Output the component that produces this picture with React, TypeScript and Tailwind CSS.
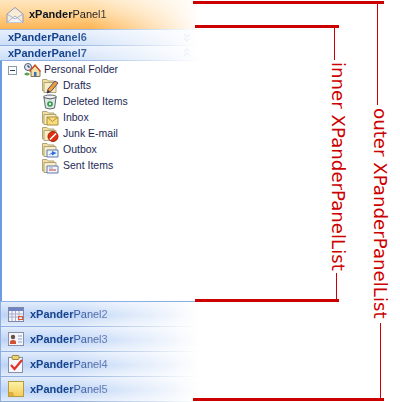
function FolderBase({ children }: { children?: React.ReactNode }) {
  return (
    <svg width="18" height="16" viewBox="0 0 18 16" className="shrink-0">
      <path d="M1.5 3 L1.5 1.5 L6 1.5 L7.5 3 L13 3 L13 13 L1.5 13 Z" fill="#f3dfa0" stroke="#b0a478" strokeWidth="1" />
      <path d="M3 4.5 H15 V14.5 H3 Z" fill="#f8eec4" stroke="#b0a478" strokeWidth="1" />
      {children}
    </svg>
  );
}

function DraftsIcon() {
  return (
    <FolderBase>
      <path d="M6 15 L7 11 L14 3 L17 5 L10 13.5 Z" fill="#f0a030" stroke="#5a4a80" strokeWidth="1" />
      <path d="M6 15 L7 12 L9 14 Z" fill="#30284c" />
    </FolderBase>
  );
}

function TrashIcon() {
  return (
    <svg width="18" height="16" viewBox="0 0 18 16" className="shrink-0">
      <ellipse cx="9" cy="3" rx="6.5" ry="2" fill="#eef2f2" stroke="#60686c" />
      <path d="M3 3.5 L4.5 14 Q9 16 13.5 14 L15 3.5 Q9 6.5 3 3.5 Z" fill="#dfe7e7" stroke="#60686c" />
      <circle cx="9" cy="10" r="2.8" fill="#2f9a48" />
      <circle cx="9" cy="10" r="1.2" fill="#e4f2e4" />
    </svg>
  );
}

function InboxIcon() {
  return (
    <FolderBase>
      <path d="M6 7 H17 V15 H6 Z" fill="#f8dc80" stroke="#b08c30" />
      <path d="M6 7 L11.5 11.5 L17 7" fill="none" stroke="#b08c30" />
    </FolderBase>
  );
}

function JunkIcon() {
  return (
    <FolderBase>
      <circle cx="12" cy="10.5" r="5" fill="#e03010" stroke="#a02008" />
      <path d="M9 13.5 L15 7.5" stroke="#ffffff" strokeWidth="1.6" />
    </FolderBase>
  );
}

function OutboxIcon() {
  return (
    <FolderBase>
      <path d="M6 8 H17 V15 H6 Z" fill="#eef2fa" stroke="#6078b0" />
      <path d="M7.5 13 L11 10.5 V9 L15.5 11 L11 13.5 V12 Z" fill="#2a6ce0" />
    </FolderBase>
  );
}

function SentIcon() {
  return (
    <FolderBase>
      <path d="M6 8 H17 V15 H6 Z" fill="#f2f4fa" stroke="#6078b0" />
      <path d="M8 12 H15" stroke="#c04040" strokeWidth="1" />
      <path d="M8 10 H12" stroke="#90a0c8" strokeWidth="1" />
    </FolderBase>
  );
}

function PersonalIcon() {
  return (
    <svg width="18" height="16" viewBox="0 0 18 16" className="shrink-0">
      <circle cx="5" cy="5" r="3.5" fill="#dfe7f2" stroke="#505a70" />
      <path d="M5 5 L5 3 M5 5 L7 5" stroke="#303a50" />
      <path d="M7 9 L12 3.5 L17 9 V14.5 H8 V9 Z" fill="#f3e2a8" stroke="#8a7640" />
      <path d="M6.5 9.5 L12 3 L17.5 9.5" fill="none" stroke="#d04820" strokeWidth="1.4" />
      <rect x="11" y="10" width="2.5" height="4.5" fill="#3a70c0" />
      <path d="M1 12 Q4 9 7 12 Q4 15 1 12 Z" fill="#58a050" />
    </svg>
  );
}

function MailHeaderIcon() {
  return (
    <svg width="18" height="18" viewBox="0 0 18 18" className="shrink-0">
      <path d="M1 8 L9 1.5 L17 8 V16.5 H1 Z" fill="#f8ecd8" stroke="#8d9bb8" strokeWidth="1" />
      <path d="M1 16.5 L9 10 L17 16.5" fill="#f4f6fc" stroke="#a6b2cc" strokeWidth="1" />
      <path d="M1 8 L9 13 L17 8" fill="none" stroke="#a6b2cc" strokeWidth="1" />
    </svg>
  );
}

function CalendarIcon() {
  return (
    <svg width="16" height="16" viewBox="0 0 16 16" className="shrink-0">
      <rect x="0.5" y="1.5" width="15" height="14" fill="#f4f4fa" stroke="#8088a8" />
      <rect x="1" y="2" width="14" height="3" fill="#6f82c6" />
      <path d="M1 8 H15 M1 11 H15 M4 5 V15 M7.5 5 V15 M11 5 V15" stroke="#a9aecb" strokeWidth="1" />
      <rect x="10.5" y="10.5" width="4" height="3" fill="none" stroke="#e0582c" strokeWidth="1" />
    </svg>
  );
}

function ContactIcon() {
  return (
    <svg width="16" height="14" viewBox="0 0 16 14" className="shrink-0">
      <rect x="0.5" y="0.5" width="15" height="13" fill="#f4f6fb" stroke="#8a90a8" />
      <circle cx="5" cy="5" r="2.2" fill="#6a5044" />
      <path d="M2 12 V10 Q2 8 5 8 Q8 8 8 10 V12 Z" fill="#d05030" />
      <path d="M10 4 H14 M10 7 H14 M10 10 H14" stroke="#8aa0c4" strokeWidth="1" />
    </svg>
  );
}

function TaskIcon() {
  return (
    <svg width="16" height="18" viewBox="0 0 16 18" className="shrink-0">
      <rect x="0.5" y="2.5" width="14" height="15" fill="#f6f8fc" stroke="#8a90a8" />
      <rect x="4" y="0.5" width="7" height="4" rx="1" fill="#eed27a" stroke="#a08a40" />
      <path d="M3 10 L6.5 14 L14 5" fill="none" stroke="#e0342c" strokeWidth="2.2" />
    </svg>
  );
}

function NoteIcon() {
  return (
    <svg width="16" height="16" viewBox="0 0 16 16" className="shrink-0">
      <defs>
        <linearGradient id="note" x1="0" y1="0" x2="0" y2="1">
          <stop offset="0" stopColor="#fdf2a8" />
          <stop offset="1" stopColor="#f4cc58" />
        </linearGradient>
      </defs>
      <rect x="0.5" y="0.5" width="15" height="15" fill="url(#note)" stroke="#b89a40" />
      <path d="M1 11 L5 11 L6 15 L1 15 Z" fill="#dcae3c" />
    </svg>
  );
}

function Chevrons({ up }: { up?: boolean }) {
  return (
    <svg width="8" height="9" viewBox="0 0 8 9" className="shrink-0">
      <path
        d={up ? "M1 4 L4 1 L7 4 M1 8 L4 5 L7 8" : "M1 1 L4 4 L7 1 M1 5 L4 8 L7 5"}
        fill="none"
        stroke="#5a6c98"
        strokeWidth="1.4"
      />
    </svg>
  );
}

function LargePanel({ n, icon, active }: { n: number; icon: React.ReactNode; active?: boolean }) {
  return (
    <div
      className={
        active
          ? "flex h-[30px] items-center gap-[5px] border-b border-[#9ab8e0] bg-[linear-gradient(180deg,#ffe6c0_0%,#ffd596_45%,#fdb454_100%)] pl-[5px] [mask-image:linear-gradient(90deg,#000_45%,transparent_100%)]"
          : "flex h-[25px] items-center gap-[5px] border-b border-l border-[#8eaee0] bg-[linear-gradient(180deg,#e2ecfc_0%,#bdd4f6_55%,#e2ecfb_100%)] pl-[5px] [mask-image:linear-gradient(90deg,#000_35%,transparent_100%)]"
      }
    >
      <div className="flex w-[19px] justify-center">{icon}</div>
      <span
        className={
          active
            ? "text-[11px] font-bold text-[#0c1420]"
            : "text-[11px] font-bold text-[#15428b]"
        }
      >
        xPander
        <span className={active ? "font-normal text-[#222222]" : "font-normal text-[#2a4e98]"}>Panel{n}</span>
      </span>
    </div>
  );
}

function SmallPanel({ n, up }: { n: number; up?: boolean }) {
  return (
    <div className="flex h-[15.5px] items-center justify-between border-b border-[#8eaee0] bg-[linear-gradient(180deg,#e6effc_0%,#cbdef8_100%)] pl-[8px] pr-[9px] [mask-image:linear-gradient(90deg,#000_30%,transparent_100%)]">
      <span className="text-[11px] font-bold text-[#15428b]">xPanderPanel{n}</span>
      <Chevrons up={up} />
    </div>
  );
}

const items: [string, React.ReactNode][] = [
  ["Drafts", <DraftsIcon key="d" />],
  ["Deleted Items", <TrashIcon key="t" />],
  ["Inbox", <InboxIcon key="i" />],
  ["Junk E-mail", <JunkIcon key="j" />],
  ["Outbox", <OutboxIcon key="o" />],
  ["Sent Items", <SentIcon key="s" />],
];

export default function App() {
  return (
    <div className="relative h-[402px] w-[400px] overflow-hidden bg-white font-['Liberation_Sans',sans-serif]">
      <div className="flex h-full w-[200px] flex-col">
        <LargePanel n={1} icon={<MailHeaderIcon />} active />
        <SmallPanel n={6} />
        <SmallPanel n={7} up />
        <div className="h-[240px] border-l-2 border-[#6b9ae0] pl-[6px] pt-[1px] text-[10.5px] text-[#1e2a55]">
          <div className="flex h-[16px] items-center">
            <div className="flex h-[9px] w-[9px] items-center justify-center border border-[#8a9bb0]">
              <div className="h-px w-[5px] bg-[#304060]" />
            </div>
            <div className="ml-[6px]">
              <PersonalIcon />
            </div>
            <span className="ml-[3px]">Personal Folder</span>
          </div>
          {items.map(([label, icon]) => (
            <div key={label} className="flex h-[16px] items-center pl-[33px]">
              {icon}
              <span className="ml-[4px]">{label}</span>
            </div>
          ))}
        </div>
        <div className="border-t border-[#8cb0e4]">
          <LargePanel n={2} icon={<CalendarIcon />} />
          <LargePanel n={3} icon={<ContactIcon />} />
          <LargePanel n={4} icon={<TaskIcon />} />
          <LargePanel n={5} icon={<NoteIcon />} />
        </div>
      </div>

      {/* annotation brackets */}
      <div className="absolute left-[193px] top-[1px] h-[3px] w-[191px] bg-[#cc0000]" />
      <div className="absolute left-[195px] top-[25px] h-[3px] w-[144px] bg-[#cc0000]" />
      <div className="absolute left-[195px] top-[299px] h-[3px] w-[144px] bg-[#cc0000]" />
      <div className="absolute left-[193px] top-[398px] h-[3px] w-[191px] bg-[#cc0000]" />
      <div className="absolute left-[334px] top-[27px] h-[33px] w-px bg-[#cc0000]" />
      <div className="absolute left-[336px] top-[273px] h-[27px] w-px bg-[#cc0000]" />
      <div className="absolute left-[377px] top-[3px] h-[102px] w-px bg-[#cc0000]" />
      <div className="absolute left-[380px] top-[323px] h-[76px] w-px bg-[#cc0000]" />
      <div className="absolute left-[329px] top-[62px] whitespace-nowrap font-['DejaVu_Sans',sans-serif] text-[18.2px] leading-[18px] text-[#cc0000] [writing-mode:vertical-rl]">
        inner XPanderPanelList
      </div>
      <div className="absolute left-[371px] top-[108px] whitespace-nowrap font-['DejaVu_Sans',sans-serif] text-[18.2px] leading-[18px] text-[#cc0000] [writing-mode:vertical-rl]">
        outer XPanderPanelList
      </div>
    </div>
  );
}
